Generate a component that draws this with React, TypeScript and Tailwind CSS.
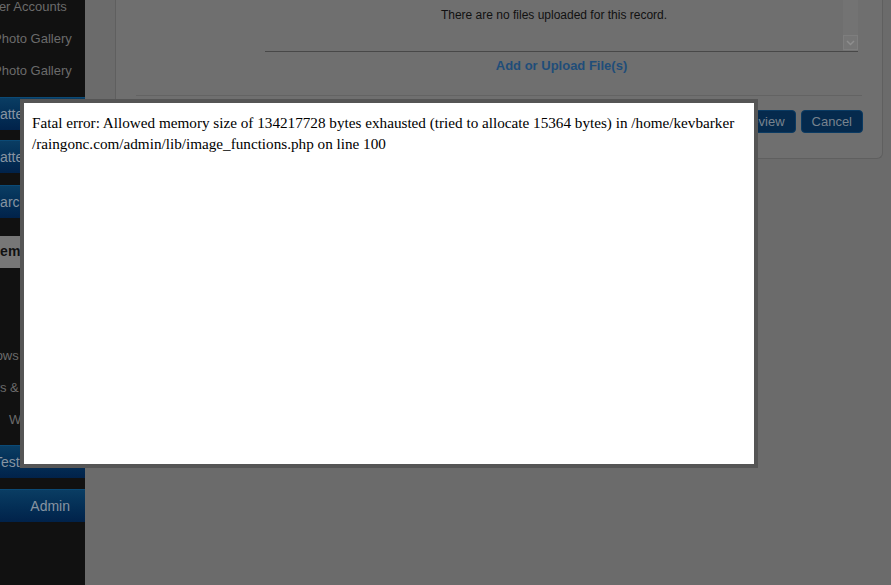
import React from "react";

const blueBar =
  "h-[33px] flex items-center bg-gradient-to-b from-[#0a3d63] to-[#01224a] border-t border-[#0b4a76] text-[14px] text-[#8794a1] whitespace-nowrap overflow-hidden";

function SubItem({ text, offset }: { text: string; offset: string }) {
  return (
    <div className="h-[32px] flex items-center text-[13px] text-[#6b6b6b] whitespace-nowrap overflow-hidden">
      <span className={offset}>{text}</span>
    </div>
  );
}

export default function App() {
  return (
    <div
      className="relative w-[891px] h-[585px] overflow-hidden flex bg-[#6b6b6b]"
      style={{ fontFamily: '"Liberation Sans", Arial, sans-serif' }}
    >
      {/* Sidebar */}
      <div className="w-[85px] h-full bg-[#111111] flex flex-col overflow-hidden">
        <div className="mt-[-9px]">
          <SubItem text="User Accounts" offset="ml-[-17px]" />
          <SubItem text="Photo Gallery" offset="ml-[-7px]" />
          <SubItem text="Photo Gallery" offset="ml-[-7px]" />
        </div>
        <div className={`${blueBar} mt-[10px]`}>
          <span className="ml-[-18px]">Chatter</span>
        </div>
        <div className={`${blueBar} mt-[10px] h-[32px]`}>
          <span className="ml-[-18px]">Chatter</span>
        </div>
        <div className={`${blueBar} mt-[12px]`}>
          <span className="ml-[-17px]">Search</span>
        </div>
        <div className="mt-[18px] h-[32px] bg-[#777777] flex items-start pt-[5px] text-[14px] font-bold text-[#111] whitespace-nowrap overflow-hidden">
          <span className="ml-[-10px]">Demo</span>
        </div>
        <div className="mt-[72px]">
          <SubItem text="Slideshows" offset="ml-[-47px]" />
          <SubItem text="News & Events" offset="ml-[-26px]" />
          <SubItem text="Web Links" offset="ml-[9px]" />
        </div>
        <div className={`${blueBar} mt-[9px]`}>
          <span className="ml-[-6px]">Testimonials</span>
        </div>
        <div className={`${blueBar} mt-[11px] justify-end pr-[15px]`}>
          <span>Admin</span>
        </div>
      </div>

      {/* Main */}
      <div className="flex-1 h-full">
        <div className="ml-[30px] mr-[8px] bg-[#6f6f6f] border-l border-r border-b border-[#5f5f5f] rounded-bl-[6px] rounded-br-[6px] pb-[25px]">
          {/* files box */}
          <div className="ml-[149px] mr-[24px]">
            <div className="relative h-[52px] border-b border-[#484848]">
              <div className="pt-[8px] pr-[15px] text-center text-[12px] leading-[14px] text-[#111]">
                There are no files uploaded for this record.
              </div>
              <div className="absolute right-0 top-0 bottom-0 w-[15px] bg-[#737373] flex flex-col justify-end">
                <div className="h-[15px] mb-[1px] border border-[#7e7e7e] bg-[#767676] flex items-center justify-center">
                  <svg width="9" height="6" viewBox="0 0 9 6">
                    <path d="M1 1 L4.5 4.5 L8 1" fill="none" stroke="#8e8e8e" strokeWidth="1.5" />
                  </svg>
                </div>
              </div>
            </div>
            <div className="mt-[6px] text-center text-[13px] leading-[15px] font-bold text-[#1f4d79]">
              Add or Upload File(s)
            </div>
          </div>
          {/* separator */}
          <div className="mx-[20px] mt-[22px] border-t border-[#636363]" />
          {/* buttons */}
          <div className="mt-[14px] mr-[19px] flex justify-end gap-[5px]">
            <div className="h-[23px] px-[10px] flex items-center rounded-[4px] bg-[#052a4d] border border-[#0a3a62] text-[13px] text-[#78838e]">
              Preview
            </div>
            <div className="h-[23px] px-[10px] flex items-center rounded-[4px] bg-[#052a4d] border border-[#0a3a62] text-[13px] text-[#78838e]">
              Cancel
            </div>
          </div>
        </div>
      </div>

      {/* Modal */}
      <div className="absolute left-[20px] top-[99px] w-[738px] h-[369px] border-4 border-[#555555] bg-white">
        <div
          className="pl-[8px] pt-[9px] text-[15.2px] leading-[21px] text-black"
          style={{ fontFamily: '"Liberation Serif", "Times New Roman", serif' }}
        >
          Fatal error: Allowed memory size of 134217728 bytes exhausted (tried to allocate 15364 bytes) in /home/kevbarker
          <br />
          /raingonc.com/admin/lib/image_functions.php on line 100
        </div>
      </div>
    </div>
  );
}
